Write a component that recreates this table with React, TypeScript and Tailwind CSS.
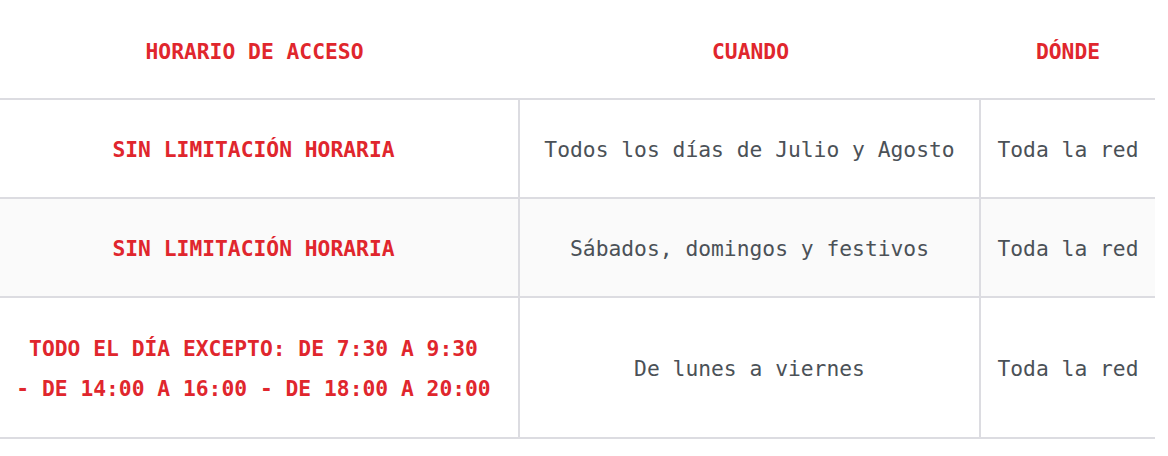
const ROWS = [
  { horario: ['SIN LIMITACIÓN HORARIA'], cuando: 'Todos los días de Julio y Agosto', donde: 'Toda la red', h: 'h-[99px]' },
  { horario: ['SIN LIMITACIÓN HORARIA'], cuando: 'Sábados, domingos y festivos', donde: 'Toda la red', h: 'h-[99px]' },
  {
    horario: ['TODO EL DÍA EXCEPTO: DE 7:30 A 9:30', '- DE 14:00 A 16:00 - DE 18:00 A 20:00'],
    cuando: 'De lunes a viernes',
    donde: 'Toda la red',
    h: 'h-[141px]',
  },
]

export default function App() {
  return (
    <div className="w-[1168px] h-[456px] bg-white overflow-hidden">
      <div
        className="w-[1155px] grid grid-cols-[520px_461px_174px] text-[21.3px] leading-[40px] text-center"
        style={{ fontFamily: '"DejaVu Sans Mono", "Liberation Mono", monospace' }}
      >
        {/* header */}
        <div className="h-[100px] pt-[5px] pr-[11px] flex items-center justify-center border-b-2 border-[#dcdce1] font-bold text-[#e0262d]">
          HORARIO DE ACCESO
        </div>
        <div className="h-[100px] pt-[5px] flex items-center justify-center border-b-2 border-[#dcdce1] font-bold text-[#e0262d]">
          CUANDO
        </div>
        <div className="h-[100px] pt-[5px] flex items-center justify-center border-b-2 border-[#dcdce1] font-bold text-[#e0262d]">
          DÓNDE
        </div>

        {ROWS.map((r, i) => {
          const bg = i % 2 === 1 ? 'bg-[#fafafa]' : 'bg-white'
          return (
            <div key={i} className="contents">
              <div className={`${r.h} ${bg} pt-[2px] pr-[11px] flex flex-col items-center justify-center border-b-2 border-r-2 border-[#dcdce1] font-bold text-[#e0262d]`}>
                {r.horario.map((l, j) => (
                  <div key={j}>{l}</div>
                ))}
              </div>
              <div className={`${r.h} ${bg} pt-[2px] flex items-center justify-center border-b-2 border-r-2 border-[#dcdce1] text-[#4b5157]`}>
                {r.cuando}
              </div>
              <div className={`${r.h} ${bg} pt-[2px] flex items-center justify-center border-b-2 border-[#dcdce1] text-[#4b5157]`}>
                {r.donde}
              </div>
            </div>
          )
        })}
      </div>
    </div>
  )
}
